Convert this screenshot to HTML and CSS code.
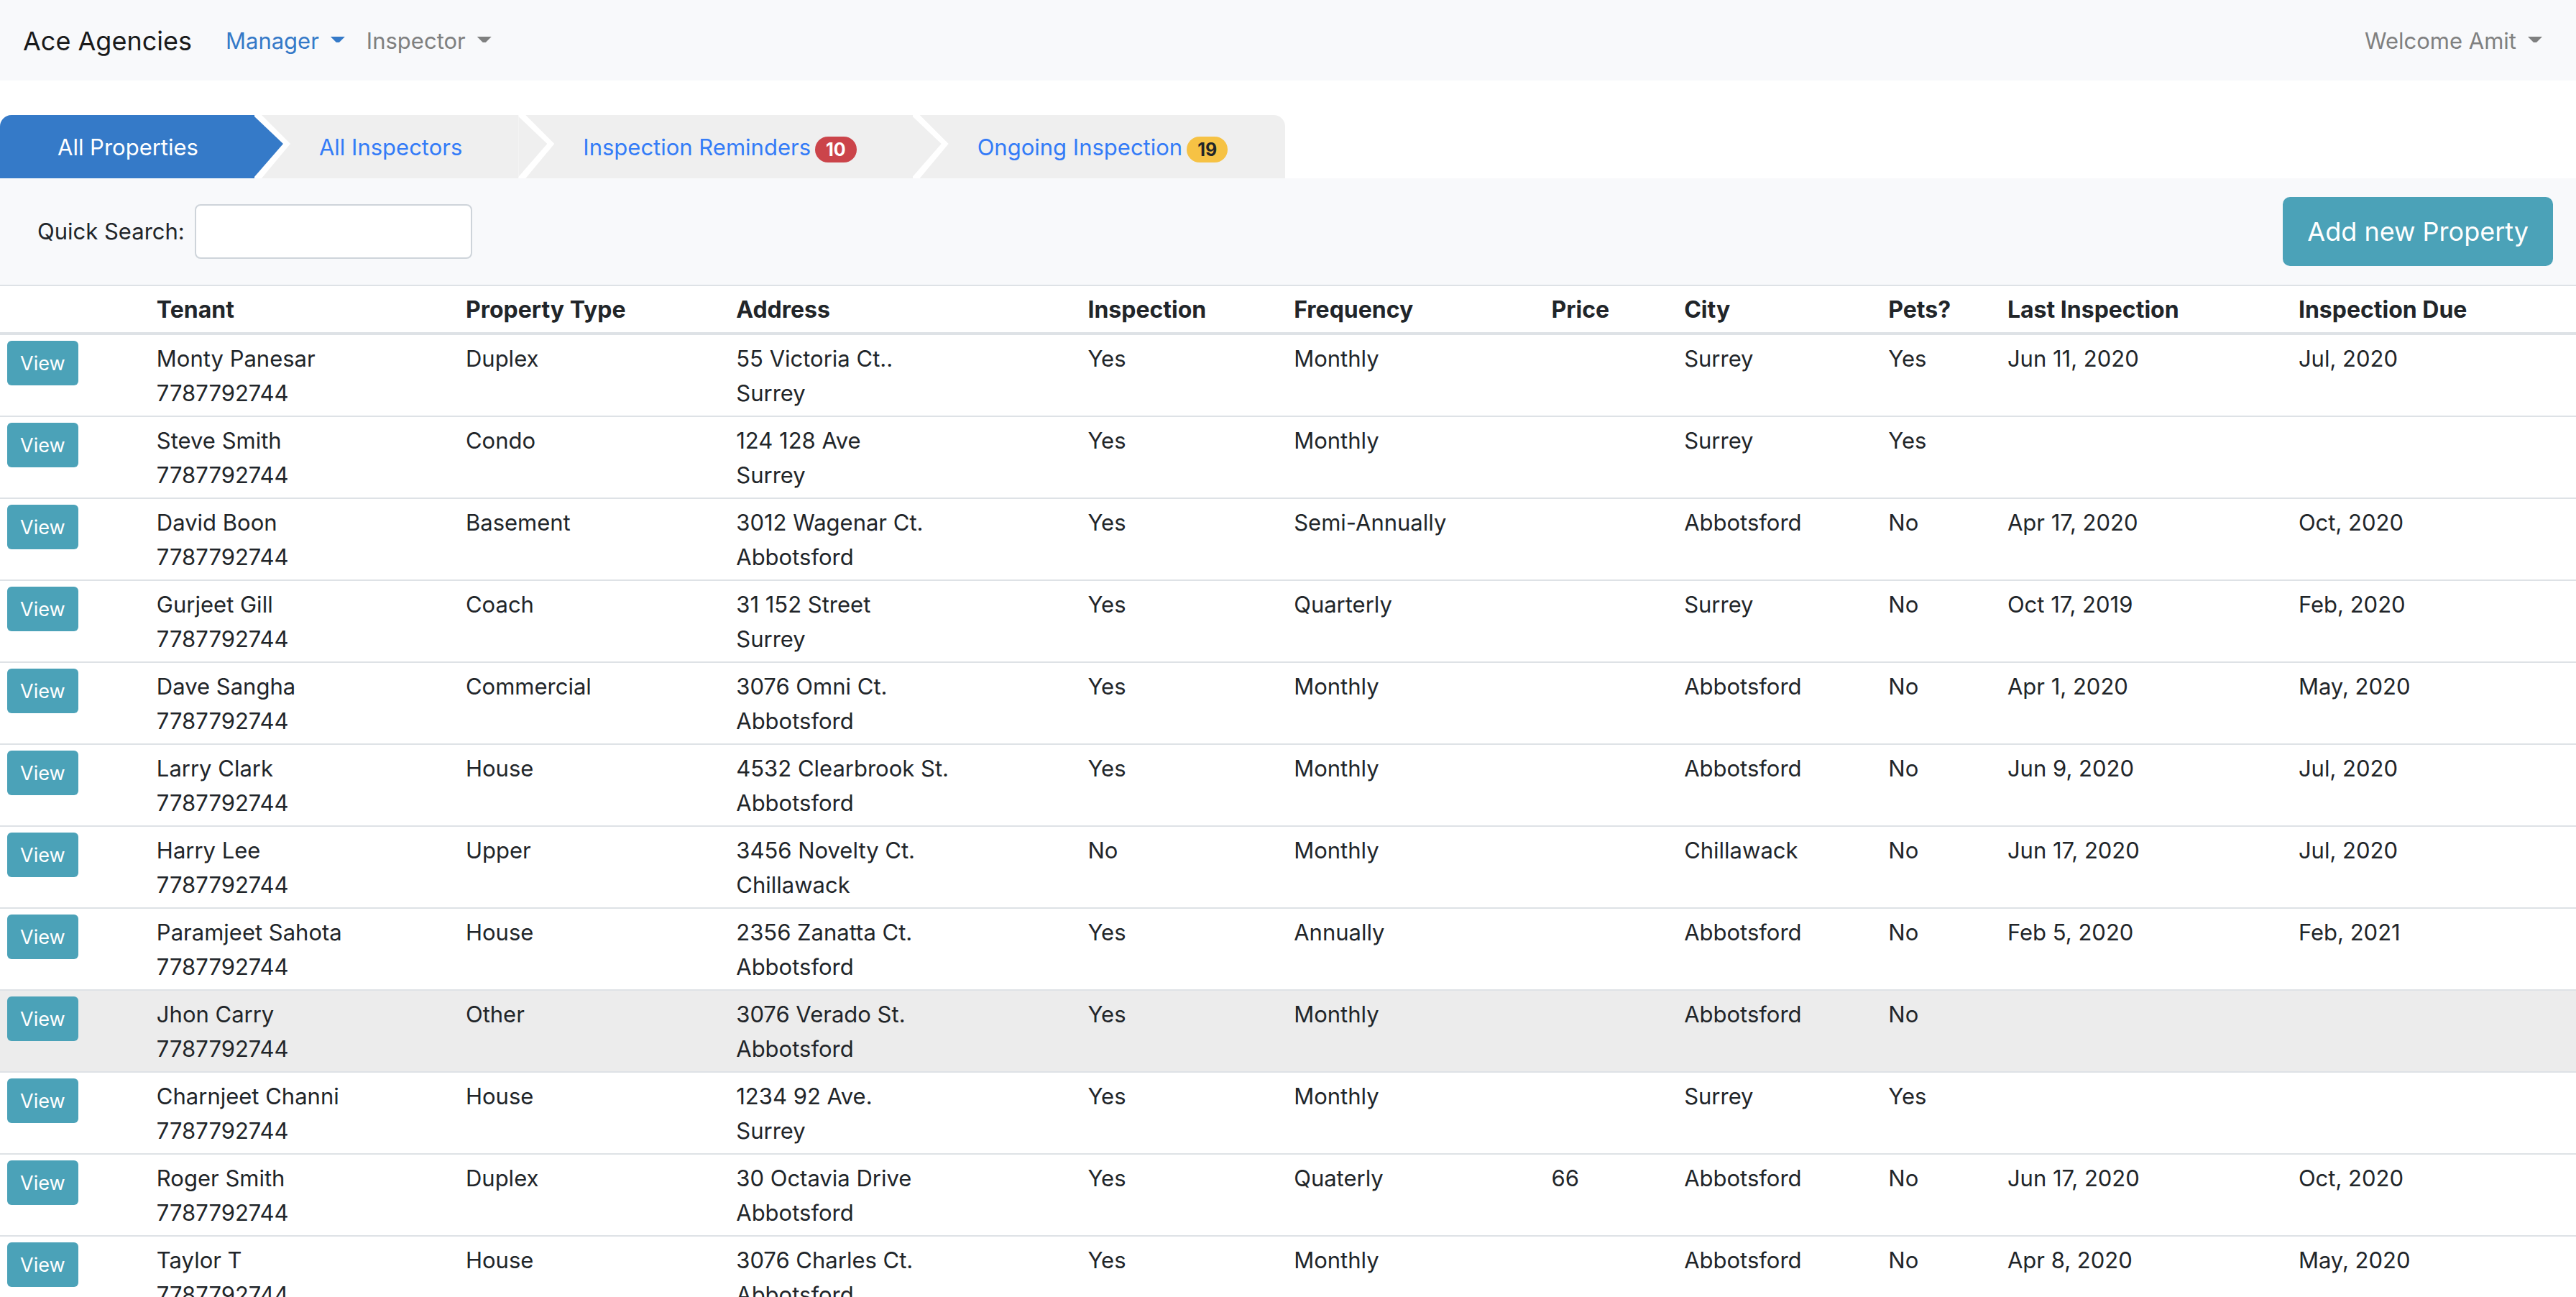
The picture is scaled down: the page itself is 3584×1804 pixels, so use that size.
FILE: index.html
```html
<!DOCTYPE html>
<html lang="en">
<head>
<meta charset="utf-8">
<title>Ace Agencies</title>
<link rel="stylesheet" href="styles.css">
</head>
<body>
<nav class="navbar">
  <a class="brand" href="#">Ace Agencies</a>
  <button class="nav-link nav-link-active" type="button">Manager<span class="caret"></span></button>
  <button class="nav-link" type="button">Inspector<span class="caret"></span></button>
  <button class="nav-link nav-user" type="button">Welcome Amit<span class="caret"></span></button>
</nav>
<ul class="steps">
  <li class="step step-active"><a href="#">All Properties</a></li>
  <li class="step"><a href="#">All Inspectors</a></li>
  <li class="step"><a href="#">Inspection Reminders<span class="badge badge-danger">10</span></a></li>
  <li class="step"><a href="#">Ongoing Inspection<span class="badge badge-warning">19</span></a></li>
</ul>
<main>
  <div class="toolbar">
    <label for="quick-search">Quick Search:</label>
    <input class="search" id="quick-search" type="text">
    <button class="btn btn-large" type="button">Add new Property</button>
  </div>
  <table class="properties">
    <colgroup>
      <col class="col-action"><col class="col-tenant"><col class="col-type"><col class="col-address"><col class="col-inspection"><col class="col-frequency"><col class="col-price"><col class="col-city"><col class="col-pets"><col class="col-last"><col class="col-due">
    </colgroup>
    <thead>
      <tr><th></th><th>Tenant</th><th>Property Type</th><th>Address</th><th>Inspection</th><th>Frequency</th><th>Price</th><th>City</th><th>Pets?</th><th>Last Inspection</th><th>Inspection Due</th></tr>
    </thead>
    <tbody>
      <tr><td class="action"><button class="btn" type="button">View</button></td><td>Monty Panesar<br>7787792744</td><td>Duplex</td><td>55 Victoria Ct..<br>Surrey</td><td>Yes</td><td>Monthly</td><td></td><td>Surrey</td><td>Yes</td><td>Jun 11, 2020</td><td>Jul, 2020</td></tr>
      <tr><td class="action"><button class="btn" type="button">View</button></td><td>Steve Smith<br>7787792744</td><td>Condo</td><td>124 128 Ave<br>Surrey</td><td>Yes</td><td>Monthly</td><td></td><td>Surrey</td><td>Yes</td><td></td><td></td></tr>
      <tr><td class="action"><button class="btn" type="button">View</button></td><td>David Boon<br>7787792744</td><td>Basement</td><td>3012 Wagenar Ct.<br>Abbotsford</td><td>Yes</td><td>Semi-Annually</td><td></td><td>Abbotsford</td><td>No</td><td>Apr 17, 2020</td><td>Oct, 2020</td></tr>
      <tr><td class="action"><button class="btn" type="button">View</button></td><td>Gurjeet Gill<br>7787792744</td><td>Coach</td><td>31 152 Street<br>Surrey</td><td>Yes</td><td>Quarterly</td><td></td><td>Surrey</td><td>No</td><td>Oct 17, 2019</td><td>Feb, 2020</td></tr>
      <tr><td class="action"><button class="btn" type="button">View</button></td><td>Dave Sangha<br>7787792744</td><td>Commercial</td><td>3076 Omni Ct.<br>Abbotsford</td><td>Yes</td><td>Monthly</td><td></td><td>Abbotsford</td><td>No</td><td>Apr 1, 2020</td><td>May, 2020</td></tr>
      <tr><td class="action"><button class="btn" type="button">View</button></td><td>Larry Clark<br>7787792744</td><td>House</td><td>4532 Clearbrook St.<br>Abbotsford</td><td>Yes</td><td>Monthly</td><td></td><td>Abbotsford</td><td>No</td><td>Jun 9, 2020</td><td>Jul, 2020</td></tr>
      <tr><td class="action"><button class="btn" type="button">View</button></td><td>Harry Lee<br>7787792744</td><td>Upper</td><td>3456 Novelty Ct.<br>Chillawack</td><td>No</td><td>Monthly</td><td></td><td>Chillawack</td><td>No</td><td>Jun 17, 2020</td><td>Jul, 2020</td></tr>
      <tr><td class="action"><button class="btn" type="button">View</button></td><td>Paramjeet Sahota<br>7787792744</td><td>House</td><td>2356 Zanatta Ct.<br>Abbotsford</td><td>Yes</td><td>Annually</td><td></td><td>Abbotsford</td><td>No</td><td>Feb 5, 2020</td><td>Feb, 2021</td></tr>
      <tr class="row-current"><td class="action"><button class="btn" type="button">View</button></td><td>Jhon Carry<br>7787792744</td><td>Other</td><td>3076 Verado St.<br>Abbotsford</td><td>Yes</td><td>Monthly</td><td></td><td>Abbotsford</td><td>No</td><td></td><td></td></tr>
      <tr><td class="action"><button class="btn" type="button">View</button></td><td>Charnjeet Channi<br>7787792744</td><td>House</td><td>1234 92 Ave.<br>Surrey</td><td>Yes</td><td>Monthly</td><td></td><td>Surrey</td><td>Yes</td><td></td><td></td></tr>
      <tr><td class="action"><button class="btn" type="button">View</button></td><td>Roger Smith<br>7787792744</td><td>Duplex</td><td>30 Octavia Drive<br>Abbotsford</td><td>Yes</td><td>Quaterly</td><td>66</td><td>Abbotsford</td><td>No</td><td>Jun 17, 2020</td><td>Oct, 2020</td></tr>
      <tr><td class="action"><button class="btn" type="button">View</button></td><td>Taylor T<br>7787792744</td><td>House</td><td>3076 Charles Ct.<br>Abbotsford</td><td>Yes</td><td>Monthly</td><td></td><td>Abbotsford</td><td>No</td><td>Apr 8, 2020</td><td>May, 2020</td></tr>
    </tbody>
  </table>
</main>
</body>
</html>
```

FILE: styles.css
```css
* { box-sizing: border-box; }

body {
  margin: 0;
  background: #fff;
  color: #212529;
  font: 31px/48px Inter, "Liberation Sans", sans-serif;
}

a { color: inherit; text-decoration: none; }
button { font: inherit; cursor: pointer; }

.navbar {
  display: flex;
  align-items: center;
  padding: 17px 32px 15px;
  background: #f8f9fb;
}

.brand {
  margin-right: 32px;
  color: #191a1b;
  font-size: 36px;
  line-height: 60px;
}

.nav-link {
  display: flex;
  align-items: center;
  padding: 16px 15px;
  border: 0;
  background: none;
  color: #7f8080;
}

.nav-link-active { color: #357ac8; }
.nav-user { margin-left: auto; }

.caret {
  width: 20px;
  height: 8px;
  margin: 0 0 4px 16px;
  background: currentColor;
  clip-path: polygon(0 0, 100% 0, 60% 100%, 40% 100%);
}

.steps {
  display: flex;
  width: max-content;
  margin: 48px 0 0;
  padding: 0;
  overflow: hidden;
  border-radius: 16px 16px 0 0;
  background: #efefef;
  list-style: none;
}

.step {
  position: relative;
  padding: 21px 78px 19px 90px;
  color: #347cf7;
}

.step:first-child { padding-left: 80px; }
.step:last-child { padding-right: 80px; }

.step-active { background: #357ac8; color: #fff; }

/* Arrow heads overlap the start of the following step. */
.step:not(:last-child)::before,
.step:not(:last-child)::after {
  content: "";
  position: absolute;
  z-index: 1;
  top: 0;
  left: 100%;
  width: 50px;
  height: 88px;
  background: #fff;
  clip-path: polygon(0 0, 10px 0, 50px 40px, 10px 100%, 0 100%);
}

.step:not(:last-child)::after {
  width: 40px;
  background: #efefef;
  clip-path: polygon(0 2px, 40px 40px, 0 86px);
}

.step-active:not(:last-child)::after { background: #357ac8; }

.badge {
  display: inline-block;
  margin-left: 6px;
  padding: 6px 15px;
  border-radius: 18px;
  font-size: 25px;
  font-weight: 700;
  line-height: 24px;
  vertical-align: middle;
}

.badge-danger { background: #cb444a; color: #fff; }
.badge-warning { background: #f6c244; color: #212529; }

.toolbar {
  display: flex;
  align-items: center;
  gap: 14px;
  padding: 26px 32px 26px 52px;
  background: #f8f9fb;
}

.search {
  width: 386px;
  height: 76px;
  padding: 12px 24px;
  border: 2px solid #ced4da;
  border-radius: 8px;
  background: #fff;
  color: inherit;
  font: inherit;
}

.btn {
  display: block;
  padding: 11px 18px 9px;
  border: 0;
  border-radius: 6px;
  background: #4ba2b8;
  color: #fff;
  font-size: 27px;
  line-height: 42px;
}

.btn-large {
  margin-left: auto;
  padding: 18px 34px;
  border-radius: 10px;
  font-size: 36px;
  line-height: 60px;
}

.properties {
  width: 100%;
  table-layout: fixed;
  border-collapse: separate;
  border-spacing: 0;
}

.col-action { width: 5.8%; }
.col-tenant { width: 12%; }
.col-type { width: 10.5%; }
.col-address { width: 13.65%; }
.col-inspection { width: 8%; }
.col-frequency { width: 10%; }
.col-price { width: 5.15%; }
.col-city { width: 7.93%; }
.col-pets { width: 4.62%; }
.col-last { width: 11.3%; }
.col-due { width: 11.05%; }

th, td {
  padding: 9px 10px 7px;
  border-bottom: 2px solid #dee2e6;
  text-align: left;
  vertical-align: top;
  white-space: nowrap;
}

th {
  border-top: 2px solid #dee2e6;
  border-bottom-width: 4px;
  font-size: 32px;
  font-weight: 700;
}

.action { padding-top: 8px; }

.row-current { background: #ececec; }
```
